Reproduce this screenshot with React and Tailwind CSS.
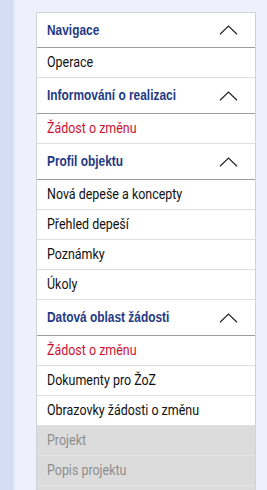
import React from "react";

const font = { fontFamily: "Roboto, 'Liberation Sans', sans-serif" };
const headFont = { fontFamily: "'Liberation Sans', Arial, sans-serif" };

function Chevron() {
  return (
    <svg width="19" height="10" viewBox="0 0 19 10" className="shrink-0">
      <path d="M1 9.2 L9.5 1 L18 9.2" fill="none" stroke="#222" strokeWidth="1.2" />
    </svg>
  );
}

function Header({ label, first }) {
  return (
    <div
      className={`flex items-center justify-between pl-[10px] pr-[17px] border-b border-[#9c9c9c] bg-white ${
        first ? "h-[35px]" : "h-[36px]"
      }`}
    >
      <span
        className="inline-block origin-left scale-x-[0.85] whitespace-nowrap text-[14px] font-bold text-[#1f3a85]"
        style={headFont}
      >
        {label}
      </span>
      <Chevron />
    </div>
  );
}

function Item({ label, red, disabled }) {
  const color = disabled ? "text-[#8d8d8d]" : red ? "text-[#cf1131]" : "text-[#111111]";
  const bg = disabled ? "bg-[#dcdcdc] border-[#e6e6e6]" : "bg-white border-[#dedede]";
  return (
    <div className={`flex items-center h-[30px] pl-[10px] border-b ${bg}`}>
      {label ? (
        <span className={`inline-block origin-left scale-x-[0.83] whitespace-nowrap text-[15px] ${color}`}>
          {label}
        </span>
      ) : null}
    </div>
  );
}

export default function App() {
  return (
    <div className="flex w-[267px] h-[490px] overflow-hidden bg-[#edf1fc]" style={font}>
      <div className="w-[13px] shrink-0 bg-[#d5ddf2]" />
      <div className="w-[2px] shrink-0 bg-[#e2e8f7]" />
      <div className="flex-1 pl-[21px] pr-[11px] pt-[12px] bg-[#eef1fc]">
        <div className="border-t border-l border-r border-[#cfd2d8] bg-white">
          <Header label="Navigace" first />
          <Item label="Operace" />
          <Header label="Informování o realizaci" />
          <Item label="Žádost o změnu" red />
          <Header label="Profil objektu" />
          <Item label="Nová depeše a koncepty" />
          <Item label="Přehled depeší" />
          <Item label="Poznámky" />
          <Item label="Úkoly" />
          <Header label="Datová oblast žádosti" />
          <Item label="Žádost o změnu" red />
          <Item label="Dokumenty pro ŽoZ" />
          <Item label="Obrazovky žádosti o změnu" />
          <Item label="Projekt" disabled />
          <Item label="Popis projektu" disabled />
          <Item disabled />
        </div>
      </div>
    </div>
  );
}
